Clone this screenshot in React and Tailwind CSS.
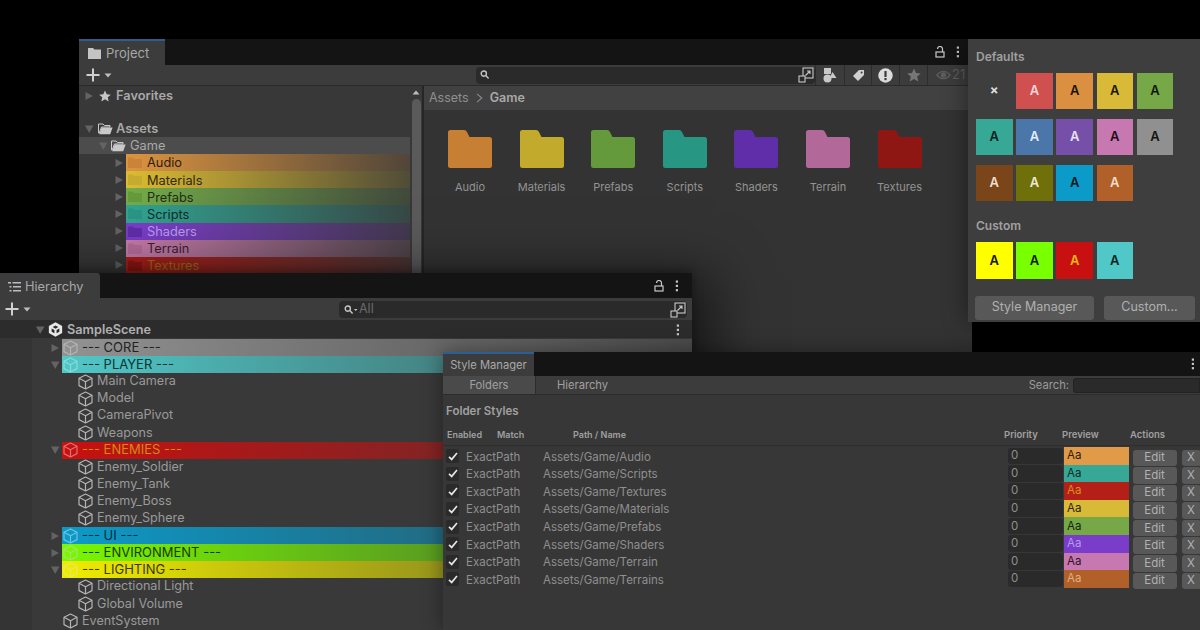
import React from "react";

const Tri = ({ dir = "right", className = "" }) => (
  <svg width="10" height="10" viewBox="0 0 10 10" className={`shrink-0 ${className}`}>
    {dir === "right" ? <path d="M1.5 1 L9 5 L1.5 9 Z" fill="#636363" /> : <path d="M1 1.5 H9.5 L5.2 9 Z" fill="#636363" />}
  </svg>
);

const Kebab = () => (
  <svg width="4" height="12" viewBox="0 0 4 12" className="shrink-0">
    <rect x="0.8" y="0.5" width="2.2" height="2.2" fill="#c4c4c4" />
    <rect x="0.8" y="4.8" width="2.2" height="2.2" fill="#c4c4c4" />
    <rect x="0.8" y="9.1" width="2.2" height="2.2" fill="#c4c4c4" />
  </svg>
);

const Lock = () => (
  <svg width="10" height="12" viewBox="0 0 10 12" fill="none" stroke="#c8c8c8" strokeWidth="1.2" className="shrink-0">
    <path d="M7.5 6 V3 a2.5 2.5 0 0 0 -5 0" />
    <rect x="1" y="6" width="8" height="5" />
  </svg>
);

const Plus = () => (
  <div className="flex items-center gap-[4px]">
    <svg width="14" height="14" viewBox="0 0 14 14" className="shrink-0">
      <path d="M6 0.5 H8 V6 H13.5 V8 H8 V13.5 H6 V8 H0.5 V6 H6 Z" fill="#d0d0d0" />
    </svg>
    <svg width="8" height="5" viewBox="0 0 8 5" className="shrink-0">
      <path d="M0.5 0.5 H7.5 L4 4.5 Z" fill="#bdbdbd" />
    </svg>
  </div>
);

const Cube = ({ color = "#b5b5b5" }) => (
  <svg width="15" height="16" viewBox="0 0 15 16" fill="none" stroke={color} strokeWidth="1.2" strokeLinejoin="round" className="shrink-0">
    <path d="M7.5 1 L14 4.3 V11.6 L7.5 15 L1 11.6 V4.3 Z" />
    <path d="M1 4.3 L7.5 7.8 L14 4.3 M7.5 7.8 V15" />
  </svg>
);

const Unity = () => (
  <svg width="15" height="15" viewBox="0 0 14 14" className="shrink-0">
    <path d="M7 0.3 L13.2 3.8 V10.2 L7 13.7 L0.8 10.2 V3.8 Z" fill="#e8e8e8" />
    <path d="M7 3.2 L4.4 4.7 L7 6.2 L9.6 4.7 Z M3.4 6 V9 L6 10.5 V7.5 Z M10.6 6 V9 L8 10.5 V7.5 Z" fill="#2b2b2b" />
  </svg>
);

const OpenFolder = () => (
  <svg width="15" height="12" viewBox="0 0 15 12" className="shrink-0">
    <path d="M0.5 1 H5 L6.5 2.5 H12 V4 H3.5 L1.2 10 H0.5 Z" fill="none" stroke="#c9c9c9" strokeWidth="1" />
    <path d="M3.6 4.6 H14.6 L12.2 11.2 H1.2 Z" fill="#c9c9c9" />
  </svg>
);

const BigFolder = ({ color }) => (
  <svg width="44" height="38" viewBox="0 0 44 38" className="block">
    <path
      d="M2.5 0 H16 Q18 0 19 2 L21.5 7 H41.5 Q44 7 44 9.5 V35.5 Q44 38 41.5 38 H2.5 Q0 38 0 35.5 V2.5 Q0 0 2.5 0 Z"
      fill={color}
    />
  </svg>
);

const SmallFolder = ({ color }) => (
  <svg width="14" height="11" viewBox="0 0 14 11" className="shrink-0">
    <path d="M0 0.5 H5 L6.5 2 H14 V11 H0 Z" fill={color} />
  </svg>
);

const FieldIcon = () => (
  <svg width="16" height="16" viewBox="0 0 16 16" fill="none" stroke="#c8c8c8" strokeWidth="1.1" className="shrink-0">
    <rect x="5" y="1" width="10" height="10" />
    <rect x="1" y="9" width="6" height="6" fill="#2a2a2a" />
    <path d="M7.5 8.5 L12 4 M9 4 H12 V7" />
  </svg>
);

const Magnifier = ({ arrow }) => (
  <svg width="14" height="10" viewBox="0 0 14 10" fill="none" stroke="#c4c4c4" strokeWidth="1.4" className="shrink-0">
    <circle cx="3.8" cy="3.6" r="2.6" />
    <path d="M5.8 5.6 L8.6 8.6" />
    {arrow && <path d="M10 4 H13.5 L11.75 6 Z" fill="#c4c4c4" stroke="none" />}
  </svg>
);

const TopIcon = ({ children, w }) => (
  <div className={`flex h-full items-center justify-center border-l border-[#2c2c2c] ${w}`}>{children}</div>
);

const projectRows = [
  { name: "Audio", band: "from-[#dc9440] to-[#dc944026]", folder: "#c9843a", text: "text-[#2e1d0b]" },
  { name: "Materials", band: "from-[#dcbc32] to-[#dcbc3226]", folder: "#c5ac30", text: "text-[#33290a]" },
  { name: "Prefabs", band: "from-[#74ac4a] to-[#74ac4a26]", folder: "#659a3c", text: "text-[#1f2d13]" },
  { name: "Scripts", band: "from-[#32a492] to-[#32a49226]", folder: "#2b9484", text: "text-[#0c3029]" },
  { name: "Shaders", band: "from-[#7c3dcc] to-[#7c3dcc26]", folder: "#5f2ea8", text: "text-[#b79bee]" },
  { name: "Terrain", band: "from-[#c87cab] to-[#c87cab26]", folder: "#b56c98", text: "text-[#3a2130]" },
  { name: "Textures", band: "from-[#b01e18] to-[#b01e1826]", folder: "#8e1714", text: "text-[#a06c1c]" },
];

const bigFolders = [
  ["Audio", "#c77f34"],
  ["Materials", "#c2aa2c"],
  ["Prefabs", "#659a3c"],
  ["Scripts", "#279784"],
  ["Shaders", "#5f2ea8"],
  ["Terrain", "#b3689a"],
  ["Textures", "#8e1714"],
];

const ProjectWindow = () => (
  <div className="absolute left-[79px] top-[39px] flex h-[313px] w-[893px] flex-col bg-[#333333]">
    <div className="flex h-[26px] shrink-0 items-center bg-[#141414] pr-[12px]">
      <div className="flex h-full w-[86px] items-center gap-[5px] border-t-2 border-[#2a5f96] bg-[#3c3c3c] pl-[9px] pt-[1px] text-[13px] text-[#a8a8a8]">
        <svg width="13" height="11" viewBox="0 0 13 11" className="shrink-0">
          <path d="M0 0 H5 L6.5 1.5 H13 V11 H0 Z" fill="#c4c4c4" />
        </svg>
        Project
      </div>
      <div className="flex flex-1 items-center justify-end gap-[11px]">
        <Lock />
        <Kebab />
      </div>
    </div>
    <div className="flex h-[21px] shrink-0 items-center border-b border-[#2a2a2a] bg-[#3c3c3c]">
      <div className="pl-[7px]">
        <Plus />
      </div>
      <div className="ml-[364px] flex h-[17px] w-[339px] items-center justify-between rounded-[4px] bg-[#2a2a2a] pl-[4px] pr-[1px]">
        <Magnifier />
        <FieldIcon />
      </div>
      <div className="flex h-full flex-1 items-center">
        <TopIcon w="w-[29px]">
          <svg width="14" height="15" viewBox="0 0 14 15" className="shrink-0">
            <rect x="1" y="0" width="7" height="6" fill="#c8c8c8" />
            <circle cx="4.5" cy="10.5" r="4" fill="#c8c8c8" />
            <path d="M9.5 4 L13.5 10 H6.5 Z" fill="#c8c8c8" />
          </svg>
        </TopIcon>
        <TopIcon w="w-[27px]">
          <svg width="13" height="13" viewBox="0 0 13 13" className="shrink-0">
            <path d="M7 1 H12 V6 L6 12 L1 7 Z" fill="#d0d0d0" />
            <circle cx="9.6" cy="3.4" r="1" fill="#3c3c3c" />
          </svg>
        </TopIcon>
        <TopIcon w="w-[28px]">
          <svg width="15" height="15" viewBox="0 0 15 15" className="shrink-0">
            <circle cx="7.5" cy="7.5" r="7.2" fill="#dcdcdc" />
            <rect x="6.4" y="3" width="2.2" height="6" fill="#3c3c3c" />
            <rect x="6.4" y="10" width="2.2" height="2.2" fill="#3c3c3c" />
          </svg>
        </TopIcon>
        <TopIcon w="w-[28px]">
          <svg width="14" height="14" viewBox="0 0 14 14" className="shrink-0">
            <path d="M7 0.5 L9 5 L13.8 5.4 L10.2 8.6 L11.3 13.4 L7 10.9 L2.7 13.4 L3.8 8.6 L0.2 5.4 L5 5 Z" fill="#767676" />
          </svg>
        </TopIcon>
        <div className="flex h-full flex-1 items-center gap-[1px] border-l border-[#2c2c2c] pl-[8px] text-[13px] text-[#5d5d5d]">
          <svg width="15" height="10" viewBox="0 0 15 10" fill="none" stroke="#5d5d5d" strokeWidth="1.2" className="shrink-0">
            <path d="M0.8 5 Q7.5 -2.5 14.2 5 Q7.5 12.5 0.8 5 Z" />
            <circle cx="7.5" cy="5" r="2.2" fill="#5d5d5d" />
          </svg>
          21
        </div>
      </div>
    </div>
    <div className="flex min-h-0 flex-1">
      <div className="flex w-[345px] shrink-0 bg-[#383838]">
        <div className="flex min-w-0 flex-1 flex-col pt-[1px] text-[12.8px]">
          <div className="flex h-[17px] items-center pl-[5px] font-semibold text-[#a9a9a9]">
            <Tri />
            <span className="ml-[5px] mr-[5px]">
              <svg width="12" height="12" viewBox="0 0 14 14" className="block">
                <path d="M7 0.5 L9 5 L13.8 5.4 L10.2 8.6 L11.3 13.4 L7 10.9 L2.7 13.4 L3.8 8.6 L0.2 5.4 L5 5 Z" fill="#c4c4c4" />
              </svg>
            </span>
            <span>Favorites</span>
          </div>
          <div className="h-[16px]" />
          <div className="flex h-[17px] items-center gap-[4px] pl-[5px] font-semibold text-[#a9a9a9]">
            <Tri dir="down" />
            <OpenFolder />
            <span className="ml-[-1px]">Assets</span>
          </div>
          <div className="flex h-[17px] items-center gap-[3px] bg-[#4c4c4c] pl-[19px] text-[#a9a9a9]">
            <Tri dir="down" />
            <OpenFolder />
            <span className="ml-[1px]">Game</span>
          </div>
          {projectRows.map((r) => (
            <div key={r.name} className="flex h-[17.15px] shrink-0 items-center pl-[35px]">
              <Tri className="mr-[2px]" />
              <div className={`flex h-full flex-1 items-center gap-[5px] bg-linear-to-r/srgb pl-[2px] ${r.band}`}>
                <SmallFolder color={r.folder} />
                <span className={`pt-[1px] ${r.text}`}>{r.name}</span>
              </div>
            </div>
          ))}
        </div>
        <div className="flex w-[12px] shrink-0 flex-col items-center pt-[4px]">
          <svg width="8" height="5" viewBox="0 0 8 5" className="shrink-0">
            <path d="M0.5 4.5 H7.5 L4 0.5 Z" fill="#bdbdbd" />
          </svg>
          <div className="mt-[4px] w-[9px] flex-1 rounded-t-[5px] bg-[#5a5a5a]" />
        </div>
        <div className="w-[2px] shrink-0 bg-[#262626]" />
      </div>
      <div className="min-w-0 flex-1">
        <div className="flex h-[24px] items-center gap-[7px] bg-[#414141] pl-[5px] text-[12.5px] text-[#8f8f8f]">
          Assets
          <svg width="7" height="10" viewBox="0 0 7 10" fill="none" stroke="#8a8a8a" strokeWidth="1.1" className="shrink-0">
            <path d="M1 0.8 L5.8 5 L1 9.2" />
          </svg>
          <span className="font-semibold text-[#a9a9a9]">Game</span>
        </div>
        <div className="flex gap-[27.6px] pl-[24px] pt-[20px]">
          {bigFolders.map(([name, color]) => (
            <div key={name} className="relative w-[44px]">
              <BigFolder color={color} />
              <div className="mt-[12px] flex justify-center whitespace-nowrap text-[11px] leading-[14px] text-[#939393]">{name}</div>
            </div>
          ))}
        </div>
      </div>
    </div>
  </div>
);

const S = ({ c, t, label = "A" }) => (
  <div className={`flex h-[36.5px] w-[36.5px] items-center justify-center text-[13px] font-semibold ${c} ${t}`}>{label}</div>
);

const StylePopup = () => (
  <div className="absolute left-[968px] top-[39px] flex h-[283px] w-[232px] flex-col bg-[#3e3e3e] pl-[8px] pt-[11px] shadow-[0_0_24px_rgba(0,0,0,0.45)]">
    <div className="text-[12px] font-semibold leading-[14px] text-[#a0a0a0]">Defaults</div>
    <div className="mt-[8.5px] grid w-[197px] grid-cols-[repeat(5,36.5px)] gap-x-[3.7px] gap-y-[9.6px]">
      <div className="flex h-[36.5px] w-[36.5px] items-center justify-center text-[13px] font-bold text-[#dddddd]">×</div>
      <S c="bg-[#d05050]" t="text-[#f0d8d8]" />
      <S c="bg-[#da9040]" t="text-[#1c1408]" />
      <S c="bg-[#d8b938]" t="text-[#1c1808]" />
      <S c="bg-[#76a848]" t="text-[#101a08]" />
      <S c="bg-[#38a896]" t="text-[#0a1f1c]" />
      <S c="bg-[#4a76aa]" t="text-[#e4ecf6]" />
      <S c="bg-[#7650a8]" t="text-[#e8e0f4]" />
      <S c="bg-[#c878b0]" t="text-[#1e1018]" />
      <S c="bg-[#909090]" t="text-[#141414]" />
      <S c="bg-[#7a4518]" t="text-[#eeddcc]" />
      <S c="bg-[#70700a]" t="text-[#ecead0]" />
      <S c="bg-[#0c9ac8]" t="text-[#041820]" />
      <S c="bg-[#b06028]" t="text-[#f0dcc8]" />
    </div>
    <div className="mt-[18px] text-[12px] font-semibold leading-[14px] text-[#a0a0a0]">Custom</div>
    <div className="mt-[9px] flex gap-[3.7px]">
      <S c="bg-[#ffff00]" t="text-[#141400]" />
      <S c="bg-[#78ff00]" t="text-[#0c1a00]" />
      <S c="bg-[#c81010]" t="text-[#f0b810]" />
      <S c="bg-[#50c8c8]" t="text-[#082424]" />
    </div>
    <div className="mt-[17px] flex gap-[10px]">
      <div className="ml-[-1px] flex h-[24px] w-[119px] items-center justify-center rounded-[3px] bg-[#585858] text-[12.5px] text-[#b0b0b0]">Style Manager</div>
      <div className="flex h-[24px] w-[91px] items-center justify-center rounded-[3px] bg-[#585858] text-[12.5px] text-[#b0b0b0]">Custom...</div>
    </div>
  </div>
);

const treeRows = [
  { band: "from-[#929292] to-[#92929233]", cube: "#b4b4b4", text: "text-[#222222]", name: "--- CORE ---", arrow: "right" },
  { band: "from-[#50c8c8] to-[#50c8c833]", cube: "#8adada", text: "text-[#0c3434]", name: "--- PLAYER ---", arrow: "down" },
  { name: "Main Camera" },
  { name: "Model" },
  { name: "CameraPivot" },
  { name: "Weapons" },
  { band: "from-[#c81010] to-[#c8101033]", cube: "#e07070", text: "text-[#d08a10]", name: "--- ENEMIES ---", arrow: "down" },
  { name: "Enemy_Soldier" },
  { name: "Enemy_Tank" },
  { name: "Enemy_Boss" },
  { name: "Enemy_Sphere" },
  { band: "from-[#0c9ac8] to-[#0c9ac833]", cube: "#6cc4e0", text: "text-[#062c3a]", name: "--- UI ---", arrow: "right" },
  { band: "from-[#78f800] to-[#78f83333]", cube: "#a8e070", text: "text-[#1c3a00]", name: "--- ENVIRONMENT ---", arrow: "right" },
  { band: "from-[#f0ec00] to-[#f0ec0033]", cube: "#e8e860", text: "text-[#3a3a00]", name: "--- LIGHTING ---", arrow: "down" },
  { name: "Directional Light" },
  { name: "Global Volume" },
];

const HierarchyWindow = () => (
  <div className="absolute left-0 top-[273px] flex h-[357px] w-[692px] flex-col bg-[#393939] shadow-[0_-2px_10px_rgba(0,0,0,0.35),24px_0_50px_rgba(0,0,0,0.5)]">
    <div className="flex h-[25px] shrink-0 items-center bg-[#141414] pr-[13px]">
      <div className="flex h-full w-[100px] items-center gap-[4px] rounded-tr-[3px] bg-[#3c3c3c] pl-[8px] pt-[2px] text-[12.8px] text-[#a8a8a8]">
        <svg width="13" height="10" viewBox="0 0 13 10" className="shrink-0">
          <path d="M0 0 H3 V1.5 H0 Z M4.5 0 H13 V1.5 H4.5 Z M1.5 4 H3.5 V5.5 H1.5 Z M5 4 H13 V5.5 H5 Z M1.5 8 H3.5 V9.5 H1.5 Z M5 8 H13 V9.5 H5 Z" fill="#bcbcbc" />
        </svg>
        Hierarchy
      </div>
      <div className="flex flex-1 items-center justify-end gap-[11px]">
        <Lock />
        <Kebab />
      </div>
    </div>
    <div className="flex h-[22px] shrink-0 items-center justify-between bg-[#3c3c3c] pr-[5px]">
      <div className="pl-[5px]">
        <Plus />
      </div>
      <div className="mt-[1px] flex h-[17px] w-[348px] items-center justify-between rounded-[4px] bg-[#2a2a2a] pl-[5px] pr-[1px] text-[12.5px] text-[#6a6a6a]">
        <div className="flex items-center gap-[1px]">
          <Magnifier arrow />
          <span>All</span>
        </div>
        <FieldIcon />
      </div>
    </div>
    <div className="flex h-[18px] shrink-0 items-center bg-[#2c2c2c] pl-[35px] pr-[12px] pt-[1px] text-[12.7px] font-semibold text-[#b0b0b0]">
      <Tri dir="down" />
      <span className="ml-[3px]">
        <Unity />
      </span>
      <span className="ml-[4px] flex-1">SampleScene</span>
      <Kebab />
    </div>
    <div className="flex min-h-0 flex-1">
      <div className="w-[32px] shrink-0 bg-[#343434]" />
      <div className="min-w-0 flex-1 pt-[1px] text-[12.6px]">
        {treeRows.map((r) =>
          r.band ? (
            <div key={r.name} className="flex h-[17.1px] items-center pl-[18px]">
              <span className="flex w-[12px] shrink-0 items-center">
                <Tri dir={r.arrow} />
              </span>
              <div className={`flex h-full flex-1 items-center gap-[4px] bg-linear-to-r/srgb pl-[1px] text-[13px] ${r.band}`}>
                <Cube color={r.cube} />
                <span className={r.text}>{r.name}</span>
              </div>
            </div>
          ) : (
            <div key={r.name} className="flex h-[17.1px] items-center gap-[4px] pl-[46px] text-[#9a9a9a]">
              <Cube />
              <span>{r.name}</span>
            </div>
          )
        )}
        <div className="flex h-[17.1px] items-center gap-[4px] pl-[31px] text-[#9a9a9a]">
          <Cube />
          <span>EventSystem</span>
        </div>
      </div>
    </div>
  </div>
);

const styleRows = [
  { path: "Assets/Game/Audio", bg: "bg-[#e09a48]", t: "text-[#2a1a08]" },
  { path: "Assets/Game/Scripts", bg: "bg-[#38a896]", t: "text-[#0a2a26]" },
  { path: "Assets/Game/Textures", bg: "bg-[#b42018]", t: "text-[#d8901c]" },
  { path: "Assets/Game/Materials", bg: "bg-[#d8b938]", t: "text-[#2a2408]" },
  { path: "Assets/Game/Prefabs", bg: "bg-[#76a848]", t: "text-[#14240a]" },
  { path: "Assets/Game/Shaders", bg: "bg-[#7a3dc9]", t: "text-[#b79bee]" },
  { path: "Assets/Game/Terrain", bg: "bg-[#c878b0]", t: "text-[#2a1424]" },
  { path: "Assets/Game/Terrains", bg: "bg-[#b06028]", t: "text-[#e0b080]" },
];

const StyleManagerWindow = () => (
  <div className="absolute left-[443px] top-[352px] flex h-[278px] w-[757px] flex-col bg-[#373737] shadow-[0_0_20px_rgba(0,0,0,0.4)]">
    <div className="flex h-[24px] shrink-0 items-center bg-[#141414] pr-[5px]">
      <div className="flex h-full w-[91px] items-center justify-center border-t-2 border-[#2a5f96] bg-[#3c3c3c] pt-[1px] text-[11.2px] text-[#a8a8a8]">Style Manager</div>
      <div className="flex flex-1 justify-end">
        <Kebab />
      </div>
    </div>
    <div className="flex h-[19px] shrink-0 items-center border-b border-[#2c2c2c] bg-[#3c3c3c] text-[11.2px] text-[#a0a0a0]">
      <div className="flex h-full w-[93px] items-center justify-center border-r border-[#2c2c2c] bg-[#4a4a4a] pt-[1px]">Folders</div>
      <div className="flex w-[93px] justify-center pt-[1px]">Hierarchy</div>
      <span className="ml-auto mr-[4px] pt-[1px] text-[11.2px] text-[#9a9a9a]">Search:</span>
      <div className="h-[15px] w-[127px] rounded-l-[3px] border border-[#222222] bg-[#2a2a2a]" />
    </div>
    <div className="pl-[3px] pt-[9px] text-[11.5px] font-semibold leading-[14px] text-[#a0a0a0]">Folder Styles</div>
    <div className="mt-[10px] flex h-[14px] items-center pl-[4px] text-[9px] font-semibold text-[#a0a0a0]">
      <span className="w-[50px]">Enabled</span>
      <span className="w-[76px]">Match</span>
      <span className="w-[431px]">Path / Name</span>
      <span className="w-[58px] text-[9.5px]">Priority</span>
      <span className="w-[68px] text-[9.5px]">Preview</span>
      <span className="text-[9.5px]">Actions</span>
    </div>
    <div className="mt-[3px] h-px bg-[#2e2e2e]" />
    <div className="pt-[2.5px] text-[11.5px] text-[#8f8f8f]">
      {styleRows.map((r) => (
        <div key={r.path} className="flex h-[17.6px] items-center pl-[3px]">
          <div className="mt-[-2px] flex h-[14px] w-[13px] shrink-0 items-center justify-center rounded-[2px] bg-[#2a2a2a]">
            <svg width="10" height="9" viewBox="0 0 10 9" fill="none" stroke="#e4e4e4" strokeWidth="1.7" className="shrink-0">
              <path d="M1 4.8 L3.7 7.4 L9 1" />
            </svg>
          </div>
          <span className="ml-[7px] w-[77px] shrink-0">ExactPath</span>
          <span className="w-[465px] shrink-0">{r.path}</span>
          <div className="mt-[-3px] flex h-[16.6px] w-[55px] shrink-0 items-center rounded-[3px] bg-[#2a2a2a] pl-[3px]">0</div>
          <div className={`ml-px mt-[-3px] flex h-[17.6px] w-[65px] shrink-0 items-center pl-[3px] ${r.bg} ${r.t}`}>Aa</div>
          <div className="ml-[3.5px] mt-[1px] flex h-[16.6px] w-[44px] shrink-0 items-center justify-center rounded-[3px] bg-[#585858] text-[#b0b0b0]">Edit</div>
          <div className="ml-[5px] mt-[1px] flex h-[16.6px] w-[19px] shrink-0 items-center justify-center rounded-[3px] bg-[#585858] text-[#b0b0b0]">X</div>
        </div>
      ))}
    </div>
  </div>
);

export default function App() {
  return (
    <div className="relative h-[630px] w-[1200px] overflow-hidden bg-black font-['Inter',sans-serif]">
      <ProjectWindow />
      <StylePopup />
      <HierarchyWindow />
      <StyleManagerWindow />
    </div>
  );
}
